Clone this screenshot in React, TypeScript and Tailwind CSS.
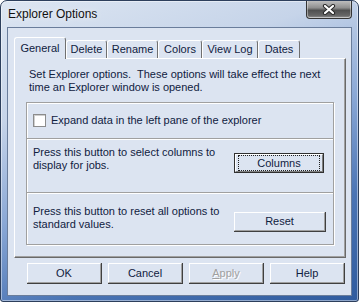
import React from 'react';

const tabs = [
  { label: 'Delete', w: 'w-[41px]' },
  { label: 'Rename', w: 'w-[51px]' },
  { label: 'Colors', w: 'w-[44px]' },
  { label: 'View Log', w: 'w-[56px]' },
  { label: 'Dates', w: 'w-[42px]' },
];

const Button = ({ label, w = 'w-[75px]', h = 'h-[21px]', disabled = false }: { label: React.ReactNode; w?: string; h?: string; disabled?: boolean }) => (
  <div className={`${w} ${h} border-r border-b border-[#404040]`}>
    <div className="h-full border-t border-l border-white border-r border-b border-r-[#a0a0a0] border-b-[#a0a0a0] flex items-center justify-center">
      <span className={disabled ? 'text-[#a0a0a0] [text-shadow:1px_1px_0_white]' : ''}>{label}</span>
    </div>
  </div>
);

const DefaultButton = ({ label, w }: { label: string; w: string }) => (
  <div className={`${w} h-[20px] border border-[#303030] relative`}>
    <div className="h-full border-t border-l border-white border-r border-b border-r-[#808080] border-b-[#808080] flex items-center justify-center">
      {label}
    </div>
    <div className="absolute left-[3px] right-[3px] top-[1px] bottom-[1px] border border-dotted border-[#202020]" />
  </div>
);

export default function App() {
  return (
    <div className="w-[359px] h-[302px] font-['Liberation_Sans',sans-serif] text-[11px] leading-[13px] text-[#10213f]">
      <div className="w-full h-full flex flex-col rounded-t-[7px] rounded-b-[3px] border border-[#2d3f5c] overflow-hidden bg-[linear-gradient(160deg,#dde6f2_0%,#c6d4e9_28%,#8aa8d6_52%,#4a74b4_75%,#2f5b9e_100%)] shadow-[inset_0_0_0_1px_rgba(255,255,255,0.45)]">
        {/* title bar */}
        <div className="h-[26px] flex items-start justify-between shrink-0">
          <div className="pl-[7px] pt-[6px] text-[12px] leading-[14px] text-[#111] [text-shadow:0_0_6px_rgba(255,255,255,0.9)]">
            Explorer Options
          </div>
          <div className="mr-[6px] w-[46px] h-[18px] rounded-b-[4px] border border-t-0 border-[#343434] bg-[linear-gradient(180deg,#bdbdbd_0%,#8f8f8f_40%,#505050_55%,#666_85%,#949494_100%)] shadow-[inset_0_-1px_0_rgba(255,255,255,0.5),inset_1px_0_0_rgba(255,255,255,0.4),inset_-1px_0_0_rgba(255,255,255,0.4)] flex items-center justify-center">
            <svg width="14" height="11" viewBox="0 0 14 11">
              <path d="M3 2 L11 9 M11 2 L3 9" stroke="#2a2a2a" strokeWidth="4.2" strokeLinecap="round" />
              <path d="M3 2 L11 9 M11 2 L3 9" stroke="#ffffff" strokeWidth="2.2" strokeLinecap="round" />
            </svg>
          </div>
        </div>

        {/* client */}
        <div className="ml-[6px] w-[345px] flex-1 mb-[5px] border border-[#6a7d9b] bg-[#dce4f1]">
          <div className="flex items-end h-[21px] ml-[6px] mt-[9px]">
            <div className="relative z-10 w-[52px] h-[22px] -mb-[1px] bg-[#dce4f1] border-t border-l border-white border-r border-r-[#707070] rounded-t-[3px] flex items-center justify-center pb-[1px]">
              General
            </div>
            {tabs.map(t => (
              <div key={t.label} className={`${t.w} h-[18px] border-t border-l border-white border-r border-r-[#707070] rounded-t-[3px] flex items-center justify-center`}>
                {t.label}
              </div>
            ))}
          </div>

          <div className="w-[332px] h-[200px] ml-[6px] border-t border-l border-white border-r border-b border-r-[#696969] border-b-[#696969] shadow-[inset_-1px_-1px_0_#a0a0a0] pt-[9px] pl-[14px]">
            <p className="whitespace-pre">Set Explorer options.  These options will take effect the next</p>
            <p>time an Explorer window is opened.</p>

            <div className="mt-[8px] -ml-[3px] w-[308px] border border-[#a0a0a0] shadow-[inset_1px_1px_0_white,1px_1px_0_white] flex flex-col">
              <div className="h-[35px] flex items-center pl-[6px]">
                <div className="w-[13px] h-[13px] bg-white border border-[#8c8c8c] shadow-[inset_1px_1px_0_#cfcfcf]" />
                <span className="ml-[5px]">Expand data in the left pane of the explorer</span>
              </div>
              <div className="h-[54px] border-t border-[#a0a0a0] shadow-[inset_0_1px_0_white] flex items-start pl-[6px]">
                <p className="w-[201px] pt-[7px]">Press this button to select columns to<br />display for jobs.</p>
                <div className="mt-[14px]">
                  <DefaultButton label="Columns" w="w-[90px]" />
                </div>
              </div>
              <div className="h-[52px] border-t border-[#a0a0a0] shadow-[inset_0_1px_0_white] flex items-start pl-[6px]">
                <p className="w-[201px] pt-[12px]">Press this button to reset all options to<br />standard values.</p>
                <div className="mt-[19px]">
                  <Button label="Reset" w="w-[92px]" h="h-[20px]" />
                </div>
              </div>
            </div>
          </div>

          <div className="flex gap-[6px] ml-[19px] mt-[5px]">
            <Button label="OK" />
            <Button label="Cancel" />
            <Button label={<><span className="underline">A</span>pply</>} disabled />
            <Button label="Help" />
          </div>
        </div>
      </div>
    </div>
  );
}
